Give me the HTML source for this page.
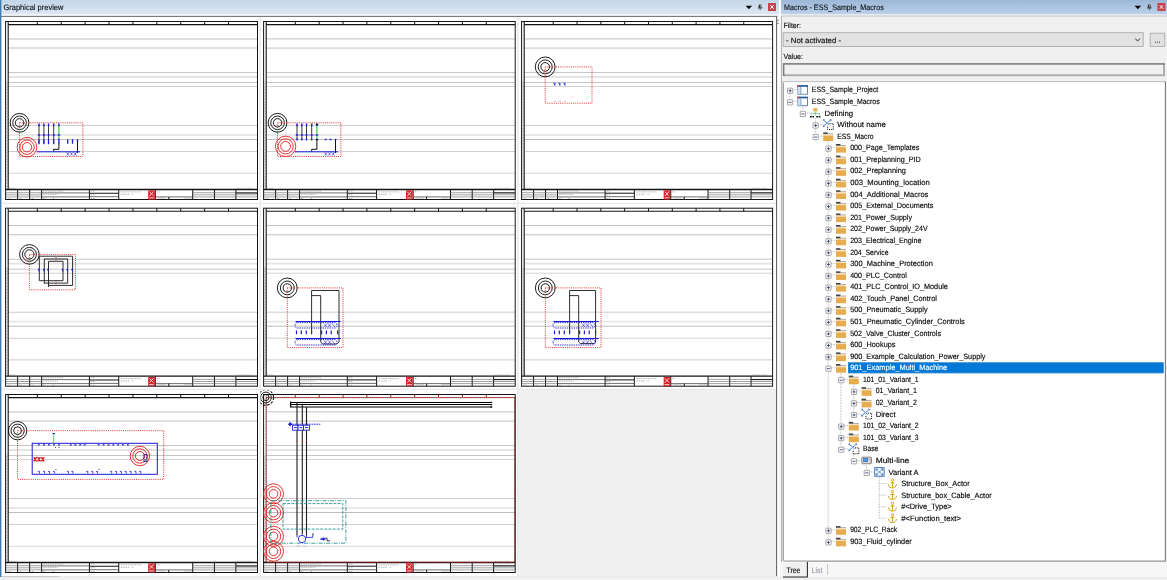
<!DOCTYPE html>
<html><head><meta charset="utf-8"><title>Graphical preview</title>
<style>html,body{margin:0;padding:0;background:#f0f0f0}body{width:1167px;height:580px;overflow:hidden;font-family:"Liberation Sans",sans-serif}svg{display:block;will-change:transform}text{font-family:"Liberation Sans",sans-serif;text-rendering:geometricPrecision;stroke-width:0.15px}</style>
</head><body>
<svg width="1167" height="580" viewBox="0 0 1167 580" font-family="Liberation Sans, sans-serif">
<defs>
<linearGradient id="tl" x1="0" y1="0" x2="0" y2="1"><stop offset="0" stop-color="#c3d5e8"/><stop offset="1" stop-color="#dde7f2"/></linearGradient>
<linearGradient id="tr" x1="0" y1="0" x2="0" y2="1"><stop offset="0" stop-color="#9cb7d7"/><stop offset="1" stop-color="#bcd1e9"/></linearGradient>
<clipPath id="c8"><rect x="260.5" y="390.5" width="257" height="186"/></clipPath>
<g id="fold"><rect x="0" y="1.7" width="10" height="1.6" fill="#f6e3bd"/><rect x="0" y="3.2" width="10" height="5.45" fill="#e6ac4e"/><rect x="0" y="0" width="4.4" height="1.6" fill="#3c3c3c"/><rect x="0" y="1.2" width="10" height="0.5" fill="#6c6c6c"/></g>
<g id="win"><rect x="0.4" y="0.4" width="9.6" height="8.6" fill="#fff" stroke="#3f6fa6" stroke-width="0.8"/><rect x="0.8" y="1.8" width="2.6" height="6.8" fill="#cfe2f4"/><rect x="0" y="0" width="10.4" height="1.6" fill="#2d5a9a"/><rect x="0" y="0" width="2.4" height="1.3" fill="#d8343c"/><path d="M3.4 1.8V8.8" stroke="#3f6fa6" stroke-width="0.6"/></g>
<g id="plus"><rect x="-2.6" y="-2.6" width="5.2" height="5.2" rx="0.4" fill="#fff" stroke="#8f8f8f" stroke-width="0.8"/><path d="M-1.5 0H1.5M0 -1.5V1.5" stroke="#2c3a78" stroke-width="0.85"/></g>
<g id="minus"><rect x="-2.6" y="-2.6" width="5.2" height="5.2" rx="0.4" fill="#fff" stroke="#8f8f8f" stroke-width="0.8"/><path d="M-1.5 0H1.5" stroke="#2c3a78" stroke-width="0.85"/></g>
<g id="mac"><path d="M6.4 4.4H10.2V10.3H4.5V6.2" stroke="#111" stroke-width="1" stroke-dasharray="1.1 1.05" fill="none"/><path d="M0.5 0.7L4.1 3.8L7.9 0.7M0.3 7.1L4.1 3.8L6.2 5.6" stroke="#2a6cbc" stroke-width="0.85" fill="none"/><path d="M0.3 1.6V0.4H1.6M8.1 1.6V0.4H6.8M0.2 6V7.3H1.5" stroke="#1f5aa6" stroke-width="0.7" fill="none"/><circle cx="4.1" cy="3.8" r="0.8" fill="#7ab4ee"/></g>
<g id="defi"><rect x="3.4" y="0" width="3.9" height="3.4" fill="#eeb04a"/><path d="M5.5 3.6V5.4M1.2 7.4V5.4H9.6V7.4M5.5 5.4V7.4" stroke="#5cb874" stroke-width="0.7" fill="none"/><path d="M0 8.7h1.7M2.4 8.7h1.6M6.3 8.7h1.7M8.7 8.7h1.7" stroke="#111" stroke-width="1.6"/></g>
<g id="multi"><rect x="0.4" y="0.4" width="9.6" height="6.6" rx="0.8" fill="#e4e4e4" stroke="#666" stroke-width="0.8"/><rect x="2.2" y="1.6" width="4.2" height="3.4" fill="#4f9be6" stroke="#2a62a8" stroke-width="0.6"/><path d="M7.2 2.4H9.2V6" stroke="#b88" stroke-width="0.7" fill="none"/></g>
<g id="vari"><rect x="0.5" y="0.5" width="9.4" height="8.6" fill="#f2f7fc" stroke="#2f6fb4" stroke-width="0.9"/><path d="M2.2 2L8.2 7.6M8.2 2L2.2 7.6" stroke="#4f88c8" stroke-width="0.8"/><path d="M2 3.4V1.8H3.6M8.4 3.4V1.8H6.8M2 6.2V7.8H3.6M8.4 6.2V7.8H6.8" stroke="#1d4f8c" stroke-width="0.7" fill="none"/></g>
<g id="anch"><circle cx="4.4" cy="1.5" r="1.2" fill="none" stroke="#d6a21e" stroke-width="0.9"/><path d="M4.4 2.7V9.2M2.4 4.4H6.4M0.4 5.8C0.6 8.2 2.4 9.4 4.4 9.4C6.4 9.4 8.2 8.2 8.4 5.8" stroke="#d6a21e" stroke-width="1" fill="none"/></g>
</defs>
<rect x="0" y="0" width="781" height="580" fill="#fdfdfd"/>
<rect x="0" y="0" width="779" height="14.2" fill="url(#tl)"/>
<rect x="0" y="14.2" width="779" height="1.8" fill="#f1f5fa"/>
<rect x="1" y="17" width="775.6" height="559.4" fill="#fff"/>
<rect x="1" y="15.9" width="776.4" height="1" fill="#6e6e6e"/>
<rect x="776" y="16" width="1.1" height="560.6" fill="#6a6a6a"/>
<path d="M777 20.3h2M777 23.3h2" stroke="#555" stroke-width="0.7"/>
<rect x="518.3" y="389.6" width="257.7" height="186.8" fill="#f0f0f0"/>
<path d="M260.2 17V576M517.9 17V576" stroke="#e3e3e3" stroke-width="1.1"/>
<path d="M1.5 203.2H776M1.5 389.2H776" stroke="#e3e3e3" stroke-width="1.1"/>
<rect x="0" y="576.3" width="781" height="3.7" fill="#f1f1f1"/>
<rect x="1.5" y="576.2" width="58" height="0.9" fill="#c4c4c4"/>
<rect x="59.5" y="576.2" width="717" height="0.9" fill="#e6e6e6"/>
<rect x="0" y="0" width="1.4" height="577" fill="#3f7db0"/>
<g transform="translate(5.6,21.5) scale(1.0011923688394277,1)">
<rect x="0" y="0" width="251.6" height="178.0" fill="#fff" stroke="none"/>
<path d="M2.6 17.4H251.6" stroke="#c2c2c2" stroke-width="1" fill="none"/>
<path d="M2.6 26.6H251.6" stroke="#c2c2c2" stroke-width="1" fill="none"/>
<path d="M2.6 51H251.6" stroke="#c6c6c6" stroke-width="1" fill="none"/>
<path d="M2.6 55.5H251.6" stroke="#e4e4e4" stroke-width="1.8" fill="none"/>
<path d="M2.6 61H251.6" stroke="#c6c6c6" stroke-width="1" fill="none"/>
<path d="M2.6 65H251.6" stroke="#d4d4d4" stroke-width="1" fill="none"/>
<path d="M2.6 104H251.6" stroke="#cccccc" stroke-width="1" fill="none"/>
<path d="M2.6 113.5H251.6" stroke="#e8e8e8" stroke-width="1.8" fill="none"/>
<path d="M2.6 118H251.6" stroke="#bebebe" stroke-width="1" fill="none"/>
<path d="M2.6 130H251.6" stroke="#d0d0d0" stroke-width="1" fill="none"/>
<path d="M2.6 151.75H251.6" stroke="#d6d6d6" stroke-width="1.2" fill="none"/>
<rect x="0" y="0" width="251.6" height="178.0" fill="none" stroke="#141414" stroke-width="1"/>
<path d="M1.35 60V167" stroke="#8a6a6a" stroke-width="0.8" stroke-dasharray="0.7 0.8" fill="none"/>
<path d="M2.6 0V168" stroke="#141414" stroke-width="1.1" fill="none"/>
<path d="M2.6 3.1H251.6" stroke="#141414" stroke-width="1.1" fill="none"/>
<path d="M31.7 0V3.4M55.57 0V3.4M79.44 0V3.4M103.31 0V3.4M127.18 0V3.4M151.05 0V3.4M174.92 0V3.4M198.79 0V3.4M222.66 0V3.4" stroke="#141414" stroke-width="1" fill="none"/>
<path d="M0 168H251.6" stroke="#141414" stroke-width="1.3" fill="none"/>
<path d="M12 168V178.0M24 168V178.0M36 168V178.0M83.7 168V178.0M113 168V178.0M149.5 168V178.0M186.9 168V178.0M208.6 168V178.0M230 168V178.0" stroke="#141414" stroke-width="1" fill="none"/>
<path d="M0 171.2H36M186.9 171.2H251.6M0 173.3H36M186.9 173.3H251.6M0 175.4H36M186.9 175.4H251.6" stroke="#555" stroke-width="0.55" fill="none"/>
<path d="M36 171.4H83.7M36 175.4H83.7M83.7 175.2H113M149.5 175.4H186.9" stroke="#333" stroke-width="0.7" fill="none"/>
<path d="M83.7 171.7H113M163 175.4V178.0M230 171.4H251.6" stroke="#141414" stroke-width="1" fill="none"/>
<path d="M37.5 169.6H58M37.5 172.9H52M37.5 177H40M47 177H49M85 169.6H89M85 173.3H89M85 177H89M115 170.4H135M115 172.8H124M126 172.8H128M151 170.4H154M3 166.8H10M231 166.8H246M2 177H5M14 177H16M26 177H28M178 176.6H186M152 176.6H160" stroke="#777" stroke-width="0.5" stroke-dasharray="1.6 0.7" fill="none"/>
<rect x="142.4" y="168.8" width="6.7" height="9.2" fill="#d6252c"/>
<path d="M143.6 170.2L147.6 174.2M147.8 170L143.8 174.4M143.4 176.4H148" stroke="#fff" stroke-width="0.8" fill="none"/>
</g>
<g transform="translate(263.6,21.5) scale(1,1)">
<rect x="0" y="0" width="251.6" height="178.0" fill="#fff" stroke="none"/>
<path d="M2.6 17.4H251.6" stroke="#c2c2c2" stroke-width="1" fill="none"/>
<path d="M2.6 26.6H251.6" stroke="#c2c2c2" stroke-width="1" fill="none"/>
<path d="M2.6 51H251.6" stroke="#c6c6c6" stroke-width="1" fill="none"/>
<path d="M2.6 55.5H251.6" stroke="#e4e4e4" stroke-width="1.8" fill="none"/>
<path d="M2.6 61H251.6" stroke="#c6c6c6" stroke-width="1" fill="none"/>
<path d="M2.6 65H251.6" stroke="#d4d4d4" stroke-width="1" fill="none"/>
<path d="M2.6 104H251.6" stroke="#cccccc" stroke-width="1" fill="none"/>
<path d="M2.6 113.5H251.6" stroke="#e8e8e8" stroke-width="1.8" fill="none"/>
<path d="M2.6 118H251.6" stroke="#bebebe" stroke-width="1" fill="none"/>
<path d="M2.6 130H251.6" stroke="#d0d0d0" stroke-width="1" fill="none"/>
<path d="M2.6 151.75H251.6" stroke="#d6d6d6" stroke-width="1.2" fill="none"/>
<rect x="0" y="0" width="251.6" height="178.0" fill="none" stroke="#141414" stroke-width="1"/>
<path d="M1.35 60V167" stroke="#8a6a6a" stroke-width="0.8" stroke-dasharray="0.7 0.8" fill="none"/>
<path d="M2.6 0V168" stroke="#141414" stroke-width="1.1" fill="none"/>
<path d="M2.6 3.1H251.6" stroke="#141414" stroke-width="1.1" fill="none"/>
<path d="M31.7 0V3.4M55.57 0V3.4M79.44 0V3.4M103.31 0V3.4M127.18 0V3.4M151.05 0V3.4M174.92 0V3.4M198.79 0V3.4M222.66 0V3.4" stroke="#141414" stroke-width="1" fill="none"/>
<path d="M0 168H251.6" stroke="#141414" stroke-width="1.3" fill="none"/>
<path d="M12 168V178.0M24 168V178.0M36 168V178.0M83.7 168V178.0M113 168V178.0M149.5 168V178.0M186.9 168V178.0M208.6 168V178.0M230 168V178.0" stroke="#141414" stroke-width="1" fill="none"/>
<path d="M0 171.2H36M186.9 171.2H251.6M0 173.3H36M186.9 173.3H251.6M0 175.4H36M186.9 175.4H251.6" stroke="#555" stroke-width="0.55" fill="none"/>
<path d="M36 171.4H83.7M36 175.4H83.7M83.7 175.2H113M149.5 175.4H186.9" stroke="#333" stroke-width="0.7" fill="none"/>
<path d="M83.7 171.7H113M163 175.4V178.0M230 171.4H251.6" stroke="#141414" stroke-width="1" fill="none"/>
<path d="M37.5 169.6H58M37.5 172.9H52M37.5 177H40M47 177H49M85 169.6H89M85 173.3H89M85 177H89M115 170.4H135M115 172.8H124M126 172.8H128M151 170.4H154M3 166.8H10M231 166.8H246M2 177H5M14 177H16M26 177H28M178 176.6H186M152 176.6H160" stroke="#777" stroke-width="0.5" stroke-dasharray="1.6 0.7" fill="none"/>
<rect x="142.4" y="168.8" width="6.7" height="9.2" fill="#d6252c"/>
<path d="M143.6 170.2L147.6 174.2M147.8 170L143.8 174.4M143.4 176.4H148" stroke="#fff" stroke-width="0.8" fill="none"/>
</g>
<g transform="translate(521.6,21.5) scale(0.9976152623211447,1)">
<rect x="0" y="0" width="251.6" height="178.0" fill="#fff" stroke="none"/>
<path d="M2.6 17.4H251.6" stroke="#c2c2c2" stroke-width="1" fill="none"/>
<path d="M2.6 26.6H251.6" stroke="#c2c2c2" stroke-width="1" fill="none"/>
<path d="M2.6 51H251.6" stroke="#c6c6c6" stroke-width="1" fill="none"/>
<path d="M2.6 55.5H251.6" stroke="#e4e4e4" stroke-width="1.8" fill="none"/>
<path d="M2.6 61H251.6" stroke="#c6c6c6" stroke-width="1" fill="none"/>
<path d="M2.6 65H251.6" stroke="#d4d4d4" stroke-width="1" fill="none"/>
<path d="M2.6 104H251.6" stroke="#cccccc" stroke-width="1" fill="none"/>
<path d="M2.6 113.5H251.6" stroke="#e8e8e8" stroke-width="1.8" fill="none"/>
<path d="M2.6 118H251.6" stroke="#bebebe" stroke-width="1" fill="none"/>
<path d="M2.6 130H251.6" stroke="#d0d0d0" stroke-width="1" fill="none"/>
<path d="M2.6 151.75H251.6" stroke="#d6d6d6" stroke-width="1.2" fill="none"/>
<rect x="0" y="0" width="251.6" height="178.0" fill="none" stroke="#141414" stroke-width="1"/>
<path d="M1.35 60V167" stroke="#8a6a6a" stroke-width="0.8" stroke-dasharray="0.7 0.8" fill="none"/>
<path d="M2.6 0V168" stroke="#141414" stroke-width="1.1" fill="none"/>
<path d="M2.6 3.1H251.6" stroke="#141414" stroke-width="1.1" fill="none"/>
<path d="M31.7 0V3.4M55.57 0V3.4M79.44 0V3.4M103.31 0V3.4M127.18 0V3.4M151.05 0V3.4M174.92 0V3.4M198.79 0V3.4M222.66 0V3.4" stroke="#141414" stroke-width="1" fill="none"/>
<path d="M0 168H251.6" stroke="#141414" stroke-width="1.3" fill="none"/>
<path d="M12 168V178.0M24 168V178.0M36 168V178.0M83.7 168V178.0M113 168V178.0M149.5 168V178.0M186.9 168V178.0M208.6 168V178.0M230 168V178.0" stroke="#141414" stroke-width="1" fill="none"/>
<path d="M0 171.2H36M186.9 171.2H251.6M0 173.3H36M186.9 173.3H251.6M0 175.4H36M186.9 175.4H251.6" stroke="#555" stroke-width="0.55" fill="none"/>
<path d="M36 171.4H83.7M36 175.4H83.7M83.7 175.2H113M149.5 175.4H186.9" stroke="#333" stroke-width="0.7" fill="none"/>
<path d="M83.7 171.7H113M163 175.4V178.0M230 171.4H251.6" stroke="#141414" stroke-width="1" fill="none"/>
<path d="M37.5 169.6H58M37.5 172.9H52M37.5 177H40M47 177H49M85 169.6H89M85 173.3H89M85 177H89M115 170.4H135M115 172.8H124M126 172.8H128M151 170.4H154M3 166.8H10M231 166.8H246M2 177H5M14 177H16M26 177H28M178 176.6H186M152 176.6H160" stroke="#777" stroke-width="0.5" stroke-dasharray="1.6 0.7" fill="none"/>
<rect x="142.4" y="168.8" width="6.7" height="9.2" fill="#d6252c"/>
<path d="M143.6 170.2L147.6 174.2M147.8 170L143.8 174.4M143.4 176.4H148" stroke="#fff" stroke-width="0.8" fill="none"/>
</g>
<g transform="translate(5.6,208.2) scale(1.0011923688394277,1)">
<rect x="0" y="0" width="251.6" height="178.0" fill="#fff" stroke="none"/>
<path d="M2.6 17.4H251.6" stroke="#c2c2c2" stroke-width="1" fill="none"/>
<path d="M2.6 26.6H251.6" stroke="#c2c2c2" stroke-width="1" fill="none"/>
<path d="M2.6 51H251.6" stroke="#c6c6c6" stroke-width="1" fill="none"/>
<path d="M2.6 55.5H251.6" stroke="#e4e4e4" stroke-width="1.8" fill="none"/>
<path d="M2.6 61H251.6" stroke="#c6c6c6" stroke-width="1" fill="none"/>
<path d="M2.6 65H251.6" stroke="#d4d4d4" stroke-width="1" fill="none"/>
<path d="M2.6 104H251.6" stroke="#cccccc" stroke-width="1" fill="none"/>
<path d="M2.6 113.5H251.6" stroke="#e8e8e8" stroke-width="1.8" fill="none"/>
<path d="M2.6 118H251.6" stroke="#bebebe" stroke-width="1" fill="none"/>
<path d="M2.6 130H251.6" stroke="#d0d0d0" stroke-width="1" fill="none"/>
<path d="M2.6 151.75H251.6" stroke="#d6d6d6" stroke-width="1.2" fill="none"/>
<rect x="0" y="0" width="251.6" height="178.0" fill="none" stroke="#141414" stroke-width="1"/>
<path d="M1.35 60V167" stroke="#8a6a6a" stroke-width="0.8" stroke-dasharray="0.7 0.8" fill="none"/>
<path d="M2.6 0V168" stroke="#141414" stroke-width="1.1" fill="none"/>
<path d="M2.6 3.1H251.6" stroke="#141414" stroke-width="1.1" fill="none"/>
<path d="M31.7 0V3.4M55.57 0V3.4M79.44 0V3.4M103.31 0V3.4M127.18 0V3.4M151.05 0V3.4M174.92 0V3.4M198.79 0V3.4M222.66 0V3.4" stroke="#141414" stroke-width="1" fill="none"/>
<path d="M0 168H251.6" stroke="#141414" stroke-width="1.3" fill="none"/>
<path d="M12 168V178.0M24 168V178.0M36 168V178.0M83.7 168V178.0M113 168V178.0M149.5 168V178.0M186.9 168V178.0M208.6 168V178.0M230 168V178.0" stroke="#141414" stroke-width="1" fill="none"/>
<path d="M0 171.2H36M186.9 171.2H251.6M0 173.3H36M186.9 173.3H251.6M0 175.4H36M186.9 175.4H251.6" stroke="#555" stroke-width="0.55" fill="none"/>
<path d="M36 171.4H83.7M36 175.4H83.7M83.7 175.2H113M149.5 175.4H186.9" stroke="#333" stroke-width="0.7" fill="none"/>
<path d="M83.7 171.7H113M163 175.4V178.0M230 171.4H251.6" stroke="#141414" stroke-width="1" fill="none"/>
<path d="M37.5 169.6H58M37.5 172.9H52M37.5 177H40M47 177H49M85 169.6H89M85 173.3H89M85 177H89M115 170.4H135M115 172.8H124M126 172.8H128M151 170.4H154M3 166.8H10M231 166.8H246M2 177H5M14 177H16M26 177H28M178 176.6H186M152 176.6H160" stroke="#777" stroke-width="0.5" stroke-dasharray="1.6 0.7" fill="none"/>
<rect x="142.4" y="168.8" width="6.7" height="9.2" fill="#d6252c"/>
<path d="M143.6 170.2L147.6 174.2M147.8 170L143.8 174.4M143.4 176.4H148" stroke="#fff" stroke-width="0.8" fill="none"/>
</g>
<g transform="translate(263.6,208.2) scale(1,1)">
<rect x="0" y="0" width="251.6" height="178.0" fill="#fff" stroke="none"/>
<path d="M2.6 17.4H251.6" stroke="#c2c2c2" stroke-width="1" fill="none"/>
<path d="M2.6 26.6H251.6" stroke="#c2c2c2" stroke-width="1" fill="none"/>
<path d="M2.6 51H251.6" stroke="#c6c6c6" stroke-width="1" fill="none"/>
<path d="M2.6 55.5H251.6" stroke="#e4e4e4" stroke-width="1.8" fill="none"/>
<path d="M2.6 61H251.6" stroke="#c6c6c6" stroke-width="1" fill="none"/>
<path d="M2.6 65H251.6" stroke="#d4d4d4" stroke-width="1" fill="none"/>
<path d="M2.6 104H251.6" stroke="#cccccc" stroke-width="1" fill="none"/>
<path d="M2.6 113.5H251.6" stroke="#e8e8e8" stroke-width="1.8" fill="none"/>
<path d="M2.6 118H251.6" stroke="#bebebe" stroke-width="1" fill="none"/>
<path d="M2.6 130H251.6" stroke="#d0d0d0" stroke-width="1" fill="none"/>
<path d="M2.6 151.75H251.6" stroke="#d6d6d6" stroke-width="1.2" fill="none"/>
<rect x="0" y="0" width="251.6" height="178.0" fill="none" stroke="#141414" stroke-width="1"/>
<path d="M1.35 60V167" stroke="#8a6a6a" stroke-width="0.8" stroke-dasharray="0.7 0.8" fill="none"/>
<path d="M2.6 0V168" stroke="#141414" stroke-width="1.1" fill="none"/>
<path d="M2.6 3.1H251.6" stroke="#141414" stroke-width="1.1" fill="none"/>
<path d="M31.7 0V3.4M55.57 0V3.4M79.44 0V3.4M103.31 0V3.4M127.18 0V3.4M151.05 0V3.4M174.92 0V3.4M198.79 0V3.4M222.66 0V3.4" stroke="#141414" stroke-width="1" fill="none"/>
<path d="M0 168H251.6" stroke="#141414" stroke-width="1.3" fill="none"/>
<path d="M12 168V178.0M24 168V178.0M36 168V178.0M83.7 168V178.0M113 168V178.0M149.5 168V178.0M186.9 168V178.0M208.6 168V178.0M230 168V178.0" stroke="#141414" stroke-width="1" fill="none"/>
<path d="M0 171.2H36M186.9 171.2H251.6M0 173.3H36M186.9 173.3H251.6M0 175.4H36M186.9 175.4H251.6" stroke="#555" stroke-width="0.55" fill="none"/>
<path d="M36 171.4H83.7M36 175.4H83.7M83.7 175.2H113M149.5 175.4H186.9" stroke="#333" stroke-width="0.7" fill="none"/>
<path d="M83.7 171.7H113M163 175.4V178.0M230 171.4H251.6" stroke="#141414" stroke-width="1" fill="none"/>
<path d="M37.5 169.6H58M37.5 172.9H52M37.5 177H40M47 177H49M85 169.6H89M85 173.3H89M85 177H89M115 170.4H135M115 172.8H124M126 172.8H128M151 170.4H154M3 166.8H10M231 166.8H246M2 177H5M14 177H16M26 177H28M178 176.6H186M152 176.6H160" stroke="#777" stroke-width="0.5" stroke-dasharray="1.6 0.7" fill="none"/>
<rect x="142.4" y="168.8" width="6.7" height="9.2" fill="#d6252c"/>
<path d="M143.6 170.2L147.6 174.2M147.8 170L143.8 174.4M143.4 176.4H148" stroke="#fff" stroke-width="0.8" fill="none"/>
</g>
<g transform="translate(521.6,208.2) scale(0.9976152623211447,1)">
<rect x="0" y="0" width="251.6" height="178.0" fill="#fff" stroke="none"/>
<path d="M2.6 17.4H251.6" stroke="#c2c2c2" stroke-width="1" fill="none"/>
<path d="M2.6 26.6H251.6" stroke="#c2c2c2" stroke-width="1" fill="none"/>
<path d="M2.6 51H251.6" stroke="#c6c6c6" stroke-width="1" fill="none"/>
<path d="M2.6 55.5H251.6" stroke="#e4e4e4" stroke-width="1.8" fill="none"/>
<path d="M2.6 61H251.6" stroke="#c6c6c6" stroke-width="1" fill="none"/>
<path d="M2.6 65H251.6" stroke="#d4d4d4" stroke-width="1" fill="none"/>
<path d="M2.6 104H251.6" stroke="#cccccc" stroke-width="1" fill="none"/>
<path d="M2.6 113.5H251.6" stroke="#e8e8e8" stroke-width="1.8" fill="none"/>
<path d="M2.6 118H251.6" stroke="#bebebe" stroke-width="1" fill="none"/>
<path d="M2.6 130H251.6" stroke="#d0d0d0" stroke-width="1" fill="none"/>
<path d="M2.6 151.75H251.6" stroke="#d6d6d6" stroke-width="1.2" fill="none"/>
<rect x="0" y="0" width="251.6" height="178.0" fill="none" stroke="#141414" stroke-width="1"/>
<path d="M1.35 60V167" stroke="#8a6a6a" stroke-width="0.8" stroke-dasharray="0.7 0.8" fill="none"/>
<path d="M2.6 0V168" stroke="#141414" stroke-width="1.1" fill="none"/>
<path d="M2.6 3.1H251.6" stroke="#141414" stroke-width="1.1" fill="none"/>
<path d="M31.7 0V3.4M55.57 0V3.4M79.44 0V3.4M103.31 0V3.4M127.18 0V3.4M151.05 0V3.4M174.92 0V3.4M198.79 0V3.4M222.66 0V3.4" stroke="#141414" stroke-width="1" fill="none"/>
<path d="M0 168H251.6" stroke="#141414" stroke-width="1.3" fill="none"/>
<path d="M12 168V178.0M24 168V178.0M36 168V178.0M83.7 168V178.0M113 168V178.0M149.5 168V178.0M186.9 168V178.0M208.6 168V178.0M230 168V178.0" stroke="#141414" stroke-width="1" fill="none"/>
<path d="M0 171.2H36M186.9 171.2H251.6M0 173.3H36M186.9 173.3H251.6M0 175.4H36M186.9 175.4H251.6" stroke="#555" stroke-width="0.55" fill="none"/>
<path d="M36 171.4H83.7M36 175.4H83.7M83.7 175.2H113M149.5 175.4H186.9" stroke="#333" stroke-width="0.7" fill="none"/>
<path d="M83.7 171.7H113M163 175.4V178.0M230 171.4H251.6" stroke="#141414" stroke-width="1" fill="none"/>
<path d="M37.5 169.6H58M37.5 172.9H52M37.5 177H40M47 177H49M85 169.6H89M85 173.3H89M85 177H89M115 170.4H135M115 172.8H124M126 172.8H128M151 170.4H154M3 166.8H10M231 166.8H246M2 177H5M14 177H16M26 177H28M178 176.6H186M152 176.6H160" stroke="#777" stroke-width="0.5" stroke-dasharray="1.6 0.7" fill="none"/>
<rect x="142.4" y="168.8" width="6.7" height="9.2" fill="#d6252c"/>
<path d="M143.6 170.2L147.6 174.2M147.8 170L143.8 174.4M143.4 176.4H148" stroke="#fff" stroke-width="0.8" fill="none"/>
</g>
<g transform="translate(5.6,394.5) scale(1.0011923688394277,1)">
<rect x="0" y="0" width="251.6" height="178.0" fill="#fff" stroke="none"/>
<path d="M2.6 17.4H251.6" stroke="#c2c2c2" stroke-width="1" fill="none"/>
<path d="M2.6 26.6H251.6" stroke="#c2c2c2" stroke-width="1" fill="none"/>
<path d="M2.6 51H251.6" stroke="#c6c6c6" stroke-width="1" fill="none"/>
<path d="M2.6 55.5H251.6" stroke="#e4e4e4" stroke-width="1.8" fill="none"/>
<path d="M2.6 61H251.6" stroke="#c6c6c6" stroke-width="1" fill="none"/>
<path d="M2.6 65H251.6" stroke="#d4d4d4" stroke-width="1" fill="none"/>
<path d="M2.6 104H251.6" stroke="#cccccc" stroke-width="1" fill="none"/>
<path d="M2.6 113.5H251.6" stroke="#e8e8e8" stroke-width="1.8" fill="none"/>
<path d="M2.6 118H251.6" stroke="#bebebe" stroke-width="1" fill="none"/>
<path d="M2.6 130H251.6" stroke="#d0d0d0" stroke-width="1" fill="none"/>
<path d="M2.6 151.75H251.6" stroke="#d6d6d6" stroke-width="1.2" fill="none"/>
<rect x="0" y="0" width="251.6" height="178.0" fill="none" stroke="#141414" stroke-width="1"/>
<path d="M1.35 60V167" stroke="#8a6a6a" stroke-width="0.8" stroke-dasharray="0.7 0.8" fill="none"/>
<path d="M2.6 0V168" stroke="#141414" stroke-width="1.1" fill="none"/>
<path d="M2.6 3.1H251.6" stroke="#141414" stroke-width="1.1" fill="none"/>
<path d="M31.7 0V3.4M55.57 0V3.4M79.44 0V3.4M103.31 0V3.4M127.18 0V3.4M151.05 0V3.4M174.92 0V3.4M198.79 0V3.4M222.66 0V3.4" stroke="#141414" stroke-width="1" fill="none"/>
<path d="M0 168H251.6" stroke="#141414" stroke-width="1.3" fill="none"/>
<path d="M12 168V178.0M24 168V178.0M36 168V178.0M83.7 168V178.0M113 168V178.0M149.5 168V178.0M186.9 168V178.0M208.6 168V178.0M230 168V178.0" stroke="#141414" stroke-width="1" fill="none"/>
<path d="M0 171.2H36M186.9 171.2H251.6M0 173.3H36M186.9 173.3H251.6M0 175.4H36M186.9 175.4H251.6" stroke="#555" stroke-width="0.55" fill="none"/>
<path d="M36 171.4H83.7M36 175.4H83.7M83.7 175.2H113M149.5 175.4H186.9" stroke="#333" stroke-width="0.7" fill="none"/>
<path d="M83.7 171.7H113M163 175.4V178.0M230 171.4H251.6" stroke="#141414" stroke-width="1" fill="none"/>
<path d="M37.5 169.6H58M37.5 172.9H52M37.5 177H40M47 177H49M85 169.6H89M85 173.3H89M85 177H89M115 170.4H135M115 172.8H124M126 172.8H128M151 170.4H154M3 166.8H10M231 166.8H246M2 177H5M14 177H16M26 177H28M178 176.6H186M152 176.6H160" stroke="#777" stroke-width="0.5" stroke-dasharray="1.6 0.7" fill="none"/>
<rect x="142.4" y="168.8" width="6.7" height="9.2" fill="#d6252c"/>
<path d="M143.6 170.2L147.6 174.2M147.8 170L143.8 174.4M143.4 176.4H148" stroke="#fff" stroke-width="0.8" fill="none"/>
</g>
<g clip-path="url(#c8)">
<g transform="translate(263.6,394.5) scale(1,1)">
<rect x="0" y="0" width="251.6" height="178.0" fill="#fff" stroke="none"/>
<path d="M2.6 17.4H251.6" stroke="#c2c2c2" stroke-width="1" fill="none"/>
<path d="M2.6 26.6H251.6" stroke="#c2c2c2" stroke-width="1" fill="none"/>
<path d="M2.6 51H251.6" stroke="#c6c6c6" stroke-width="1" fill="none"/>
<path d="M2.6 55.5H251.6" stroke="#e4e4e4" stroke-width="1.8" fill="none"/>
<path d="M2.6 61H251.6" stroke="#c6c6c6" stroke-width="1" fill="none"/>
<path d="M2.6 65H251.6" stroke="#d4d4d4" stroke-width="1" fill="none"/>
<path d="M2.6 104H251.6" stroke="#cccccc" stroke-width="1" fill="none"/>
<path d="M2.6 113.5H251.6" stroke="#e8e8e8" stroke-width="1.8" fill="none"/>
<path d="M2.6 118H251.6" stroke="#bebebe" stroke-width="1" fill="none"/>
<path d="M2.6 130H251.6" stroke="#d0d0d0" stroke-width="1" fill="none"/>
<path d="M2.6 151.75H251.6" stroke="#d6d6d6" stroke-width="1.2" fill="none"/>
<rect x="0" y="0" width="251.6" height="178.0" fill="none" stroke="#141414" stroke-width="1"/>
<path d="M1.35 60V167" stroke="#8a6a6a" stroke-width="0.8" stroke-dasharray="0.7 0.8" fill="none"/>
<path d="M2.6 0V168M2.6 3.1H251.6M251.2 3.1V168" stroke="#333" stroke-width="0.6" fill="none"/>
<path d="M31.7 0V3.4M55.57 0V3.4M79.44 0V3.4M103.31 0V3.4M127.18 0V3.4M151.05 0V3.4M174.92 0V3.4M198.79 0V3.4M222.66 0V3.4" stroke="#a02020" stroke-width="1" fill="none"/>
<path d="M0 168H251.6" stroke="#141414" stroke-width="1.3" fill="none"/>
<path d="M12 168V178.0M24 168V178.0M36 168V178.0M83.7 168V178.0M113 168V178.0M149.5 168V178.0M186.9 168V178.0M208.6 168V178.0M230 168V178.0" stroke="#141414" stroke-width="1" fill="none"/>
<path d="M0 171.2H36M186.9 171.2H251.6M0 173.3H36M186.9 173.3H251.6M0 175.4H36M186.9 175.4H251.6" stroke="#555" stroke-width="0.55" fill="none"/>
<path d="M36 171.4H83.7M36 175.4H83.7M83.7 175.2H113M149.5 175.4H186.9" stroke="#333" stroke-width="0.7" fill="none"/>
<path d="M83.7 171.7H113M163 175.4V178.0M230 171.4H251.6" stroke="#141414" stroke-width="1" fill="none"/>
<path d="M37.5 169.6H58M37.5 172.9H52M37.5 177H40M47 177H49M85 169.6H89M85 173.3H89M85 177H89M115 170.4H135M115 172.8H124M126 172.8H128M151 170.4H154M3 166.8H10M231 166.8H246M2 177H5M14 177H16M26 177H28M178 176.6H186M152 176.6H160" stroke="#777" stroke-width="0.5" stroke-dasharray="1.6 0.7" fill="none"/>
<rect x="142.4" y="168.8" width="6.7" height="9.2" fill="#d6252c"/>
<path d="M143.6 170.2L147.6 174.2M147.8 170L143.8 174.4M143.4 176.4H148" stroke="#fff" stroke-width="0.8" fill="none"/>
<path d="M2.6 3.1H251.2V167.8H2.6Z" stroke="#c41c1c" stroke-width="0.95" stroke-dasharray="1.3 0.9" fill="none"/>
</g>
<circle cx="265.9" cy="397.5" r="7.7" fill="none" stroke="#111" stroke-width="1.1" stroke-dasharray="2.6 1.5"/><circle cx="265.9" cy="397.5" r="5.4" fill="none" stroke="#111" stroke-width="0.95"/><circle cx="265.9" cy="397.5" r="3.1" fill="none" stroke="#111" stroke-width="0.95"/>
<path d="M291 402.4H491.8M291 404.55H491.8M291 406.9H491.8" stroke="#000" stroke-width="1.05" fill="none"/>
<path d="M290.6 401.6V407.6M490.4 402.3h1.8M490.4 404.6h1.8M490.4 407h1.8" stroke="#111" stroke-width="1.3" fill="none"/>
<path d="M297 402.3V535.2M302.3 404.6V534.6M306.5 407V535.2" stroke="#1c1c1c" stroke-width="1.1" fill="none"/>
<path d="M290 424.2H321" stroke="#1a1ad8" stroke-width="0.9" stroke-dasharray="1.6 0.8" fill="none"/>
<rect x="292.6" y="425.2" width="5.4" height="5" fill="#fff" stroke="#1a1ad8" stroke-width="0.9"/><rect x="298" y="425.2" width="5.6" height="5" fill="#fff" stroke="#1a1ad8" stroke-width="0.9"/><rect x="303.6" y="425.2" width="5.8" height="5" fill="#fff" stroke="#1a1ad8" stroke-width="0.9"/>
<path d="M290 422.6l2 1.6l-2 1.6l-1.6-1.6zM294 427.6h3M299.4 427.6h3M305 427.6h3" stroke="#1a1ad8" stroke-width="0.9" fill="#1a1ad8"/>
<path d="M296.6 441.2h1M301.9 441.2h1M306.1 441.2h1" stroke="#e02020" stroke-width="1"/>
<circle cx="273.5" cy="493.8" r="10" fill="none" stroke="#e02828" stroke-width="0.95"/><circle cx="273.5" cy="493.8" r="7.2" fill="none" stroke="#e02828" stroke-width="0.95"/><circle cx="273.5" cy="493.8" r="4.3" fill="none" stroke="#e02828" stroke-width="0.95"/>
<circle cx="273.5" cy="512.7" r="10" fill="none" stroke="#e02828" stroke-width="0.95"/><circle cx="273.5" cy="512.7" r="7.2" fill="none" stroke="#e02828" stroke-width="0.95"/><circle cx="273.5" cy="512.7" r="4.3" fill="none" stroke="#e02828" stroke-width="0.95"/>
<circle cx="273.5" cy="536.3" r="10" fill="none" stroke="#e02828" stroke-width="0.95"/><circle cx="273.5" cy="536.3" r="7.2" fill="none" stroke="#e02828" stroke-width="0.95"/><circle cx="273.5" cy="536.3" r="4.3" fill="none" stroke="#e02828" stroke-width="0.95"/>
<circle cx="273.5" cy="551.3" r="10" fill="none" stroke="#e02828" stroke-width="0.95"/><circle cx="273.5" cy="551.3" r="7.2" fill="none" stroke="#e02828" stroke-width="0.95"/><circle cx="273.5" cy="551.3" r="4.3" fill="none" stroke="#e02828" stroke-width="0.95"/>
<path d="M270.9 500.7H345.9V543.2H270.9Z" fill="none" stroke="#1f8c8c" stroke-width="0.85" stroke-dasharray="4 1.2 1 1.2"/>
<path d="M283 503.6H342.8V529.1H283Z" fill="none" stroke="#1f8c8c" stroke-width="0.85" stroke-dasharray="3 1.2"/>
<circle cx="302" cy="539" r="3.7" fill="#fff" stroke="#1a1ad8" stroke-width="0.9"/>
<path d="M297 535V537.5M306.5 535V537.4M305.7 537.4H312.8V534.6" stroke="#1a1ad8" stroke-width="0.8" fill="none"/>
<path d="M312.4 534.2h1.2" stroke="#111" stroke-width="1.2"/>
<path d="M320.4 539H325.5M323.5 537.6V540.4" stroke="#1a1ad8" stroke-width="1.5" fill="none"/><path d="M325.5 538.2h1.6v2.6H330" stroke="#111" stroke-width="0.8" fill="none"/>
<path d="M296 546h4M303 546h3" stroke="#aaa" stroke-width="0.5"/>
</g>
<g transform="translate(0,0)">
<circle cx="19.55" cy="122.8" r="9.4" fill="none" stroke="#111" stroke-width="0.95"/><circle cx="19.55" cy="122.8" r="6.8" fill="none" stroke="#111" stroke-width="0.95"/><circle cx="19.55" cy="122.8" r="4.2" fill="none" stroke="#111" stroke-width="0.95"/>
<circle cx="27" cy="147.2" r="9.8" fill="none" stroke="#e02828" stroke-width="0.95"/><circle cx="27" cy="147.2" r="7.2" fill="none" stroke="#e02828" stroke-width="0.95"/><circle cx="27" cy="147.2" r="4.7" fill="none" stroke="#e02828" stroke-width="0.95"/>
<path d="M19.55 122.8H82.9V156.5H19.55Z" fill="none" stroke="#e02828" stroke-width="0.95" stroke-dasharray="1 1.15"/>
<path d="M37.5 135H60.5" stroke="#9a8ae0" stroke-width="1.1"/>
<path d="M39 124.3V143.3M43.9 124.3V143.3M48.5 124.3V143.3M53.7 124.3V143.3" stroke="#222" stroke-width="0.9" fill="none"/>
<path d="M58.9 124.3V138" stroke="#22cc33" stroke-width="1.1" fill="none"/>
<path d="M39 123.6V126.2M39 139.6V144.2M38.2 135H39.8M43.9 123.6V126.2M43.9 139.6V144.2M43.1 135H44.699999999999996M48.5 123.6V126.2M48.5 139.6V144.2M47.7 135H49.3M53.7 123.6V126.2M53.7 139.6V144.2M52.900000000000006 135H54.5M58.9 123.6V126.2M58.9 139.6V144.2M58.1 135H59.699999999999996" stroke="#1a1ad8" stroke-width="1.3" fill="none"/>
<path d="M58.9 138V140" stroke="#1a1ad8" stroke-width="1.1"/>
<path d="M58.9 143.5V149.3H53.7V151.6" stroke="#111" stroke-width="1" fill="none"/>
<path d="M67.7 139.2V143.8M72.5 139.2V143.8M77.5 139.2V142" stroke="#1a1ad8" stroke-width="1.3" fill="none"/>
<path d="M77.5 141.5V153" stroke="#111" stroke-width="1" fill="none"/>
<path d="M37 151.8H80" stroke="#1a1ad8" stroke-width="1" fill="none"/>
<path d="M66.5 152.4L69 155.6M69 152.4L66.5 155.6M70.3 152.4L72.8 155.6M72.8 152.4L70.3 155.6M74 152.4L76.4 155.6M76.4 152.4L74 155.6" stroke="#1a1ad8" stroke-width="0.6" fill="none"/>
</g>
<g transform="translate(258,0)">
<circle cx="19.55" cy="122.8" r="9.4" fill="none" stroke="#111" stroke-width="0.95"/><circle cx="19.55" cy="122.8" r="6.8" fill="none" stroke="#111" stroke-width="0.95"/><circle cx="19.55" cy="122.8" r="4.2" fill="none" stroke="#111" stroke-width="0.95"/>
<circle cx="27.6" cy="146.4" r="10.2" fill="none" stroke="#e02828" stroke-width="0.95"/><circle cx="27.6" cy="146.4" r="7.6" fill="none" stroke="#e02828" stroke-width="0.95"/><circle cx="27.6" cy="146.4" r="4.9" fill="none" stroke="#e02828" stroke-width="0.95"/>
<path d="M19.55 122.8H82.9V156.5H19.55Z" fill="none" stroke="#e02828" stroke-width="0.95" stroke-dasharray="1 1.15"/>
<path d="M37.5 135H60.5" stroke="#9a8ae0" stroke-width="1.1"/>
<path d="M39 124.3V139.6M43.9 124.3V139.6M48.5 124.3V139.6M53.7 124.3V139.6" stroke="#222" stroke-width="0.9" fill="none"/>
<path d="M58.9 124.3V138" stroke="#22cc33" stroke-width="1.1" fill="none"/>
<path d="M39 123.6V126.2M39 138.2V140.6M38.2 135H39.8M43.9 123.6V126.2M43.9 138.2V140.6M43.1 135H44.699999999999996M48.5 123.6V126.2M48.5 138.2V140.6M47.7 135H49.3M53.7 123.6V126.2M53.7 138.2V140.6M52.900000000000006 135H54.5M58.9 123.6V126.2M58.9 138.2V140.6M58.1 135H59.699999999999996" stroke="#1a1ad8" stroke-width="1.3" fill="none"/>
<path d="M58.9 139.4V149.3H53.7V151.6" stroke="#111" stroke-width="1" fill="none"/>
<path d="M57.8 139.5H60.2M57.8 124.3H60.2" stroke="#111" stroke-width="1.2" fill="none"/>
<path d="M66.8 139.5H68.6M71.6 139.5H73.4M76.8 139.5H78.4" stroke="#1a1ad8" stroke-width="1.3" fill="none"/>
<path d="M77.5 139.8V153" stroke="#111" stroke-width="1" fill="none"/>
<path d="M37 151.8H80" stroke="#1a1ad8" stroke-width="1" fill="none"/>
<path d="M66.5 152.4L69 155.6M69 152.4L66.5 155.6M70.3 152.4L72.8 155.6M72.8 152.4L70.3 155.6M74 152.4L76.4 155.6M76.4 152.4L74 155.6" stroke="#1a1ad8" stroke-width="0.6" fill="none"/>
</g>
<circle cx="545.2" cy="66.9" r="9.9" fill="none" stroke="#111" stroke-width="0.95"/><circle cx="545.2" cy="66.9" r="7" fill="none" stroke="#111" stroke-width="0.95"/><circle cx="545.2" cy="66.9" r="4.3" fill="none" stroke="#111" stroke-width="0.95"/>
<path d="M545.2 66.9H592V103.2H545.2Z" fill="none" stroke="#e02828" stroke-width="0.95" stroke-dasharray="1 1.15"/>
<path d="M553.5 82.6L555 85.4V82.6M558.5 82.6L560 85.4V82.6M563.6 82.6L565 85.4V82.6" stroke="#1a1ad8" stroke-width="0.8" fill="none"/>
<path d="M554.5 101.4h1M559.5 101.4h1M564.5 101.4h1" stroke="#e02828" stroke-width="0.7"/>
<circle cx="29.4" cy="254.4" r="9.8" fill="none" stroke="#111" stroke-width="0.95"/><circle cx="29.4" cy="254.4" r="7" fill="none" stroke="#111" stroke-width="0.95"/><circle cx="29.4" cy="254.4" r="4.6" fill="none" stroke="#111" stroke-width="0.95"/>
<path d="M29.4 254.4H75.4V289.8H29.4Z" fill="none" stroke="#e02828" stroke-width="0.95" stroke-dasharray="1 1.15"/>
<path d="M39.3 280.7V256.2H72.6V285.4H48.3" stroke="#222" stroke-width="0.95" fill="none"/>
<path d="M44.3 283.8V259H67.7V283.1H44.3" stroke="#222" stroke-width="0.95" fill="none"/>
<path d="M48.5 286.9V261.3H63V280.7H39.3" stroke="#222" stroke-width="0.95" fill="none"/>
<path d="M38.4 268.8L39.3 271.4M43.4 268.8L44.3 271.4M47.6 268.8L48.5 271.4M62.1 268.8L63 271.4M66.8 268.8L67.7 271.4M71.69999999999999 268.8L72.6 271.4" stroke="#1a1ad8" stroke-width="1.1" fill="none"/>
<path d="M56 257V262.2M56 281.2V286" stroke="#e02828" stroke-width="0.8" stroke-dasharray="1 0.8"/>
<g transform="translate(0,0)">
<circle cx="287.3" cy="287.9" r="9.9" fill="none" stroke="#111" stroke-width="0.95"/><circle cx="287.3" cy="287.9" r="6.9" fill="none" stroke="#111" stroke-width="0.95"/><circle cx="287.3" cy="287.9" r="4.1" fill="none" stroke="#111" stroke-width="0.95"/>
<path d="M287.3 287.9H343V347.6H287.3Z" fill="none" stroke="#e02828" stroke-width="0.95" stroke-dasharray="1 1.15"/>
<path d="M311.6 331.5V290.5H339V341.8L336.8 344H322.5L320.7 341.8V295.6H311.6" stroke="#222" stroke-width="0.95" fill="none"/>
<path d="M295.5 321.5H340.8M295.5 338.5H340.8" stroke="#1a1ad8" stroke-width="1" fill="none"/>
<rect x="295" y="322.6" width="42" height="5.4" rx="2.4" fill="none" stroke="#1a1ad8" stroke-width="0.9" stroke-dasharray="1.4 0.9"/>
<rect x="295" y="339.6" width="42" height="5.4" rx="2.4" fill="none" stroke="#1a1ad8" stroke-width="0.9" stroke-dasharray="1.4 0.9"/>
<path d="M296.5 330.4V334.2M301.3 330.4V334.2M306.3 330.4V334.2M311.6 330.4V334.2M321.6 330.4V334.2M326.4 330.4V334.2M331.2 330.4V334.2M337.6 330.4V334.2" stroke="#1a1ad8" stroke-width="1.2" fill="none"/>
<path d="M324 323.5L327 327M327 323.5L324 327M328 323.5L331 327M331 323.5L328 327M332 323.5L335 327M324 340.5L327 344M327 340.5L324 344M328 340.5L331 344M331 340.5L328 344M332 340.5L335 344" stroke="#1a1ad8" stroke-width="0.55" fill="none"/>
</g>
<g transform="translate(258,0)">
<circle cx="287.3" cy="287.9" r="9.9" fill="none" stroke="#111" stroke-width="0.95"/><circle cx="287.3" cy="287.9" r="6.9" fill="none" stroke="#111" stroke-width="0.95"/><circle cx="287.3" cy="287.9" r="4.1" fill="none" stroke="#111" stroke-width="0.95"/>
<path d="M287.3 287.9H343V347.6H287.3Z" fill="none" stroke="#e02828" stroke-width="0.95" stroke-dasharray="1 1.15"/>
<path d="M311.6 332.5V290.5H337.6V342L336 343.6H322.3L320.7 342V295.6H311.6" stroke="#222" stroke-width="0.95" fill="none"/>
<path d="M295.5 321.5H340.8M295.5 338.5H340.8" stroke="#1a1ad8" stroke-width="1" fill="none"/>
<rect x="295" y="322.6" width="42" height="5.4" rx="2.4" fill="none" stroke="#1a1ad8" stroke-width="0.9" stroke-dasharray="1.4 0.9"/>
<rect x="295" y="339.6" width="42" height="5.4" rx="2.4" fill="none" stroke="#1a1ad8" stroke-width="0.9" stroke-dasharray="1.4 0.9"/>
<path d="M296.5 330.4V334.2M301.3 330.4V334.2M306.3 330.4V334.2M311.6 330.4V334.2M321.6 330.4V334.2M326.4 330.4V334.2M331.2 330.4V334.2M337.6 330.4V334.2" stroke="#1a1ad8" stroke-width="1.2" fill="none"/>
<path d="M324 323.5L327 327M327 323.5L324 327M328 323.5L331 327M331 323.5L328 327M332 323.5L335 327M324 340.5L327 344M327 340.5L324 344M328 340.5L331 344M331 340.5L328 344M332 340.5L335 344" stroke="#1a1ad8" stroke-width="0.55" fill="none"/>
</g>
<circle cx="17.6" cy="430.7" r="9.2" fill="none" stroke="#111" stroke-width="0.95"/><circle cx="17.6" cy="430.7" r="6.6" fill="none" stroke="#111" stroke-width="0.95"/><circle cx="17.6" cy="430.7" r="3.9" fill="none" stroke="#111" stroke-width="0.95"/>
<path d="M17.6 430.7H163.7V479.4H17.6Z" fill="none" stroke="#e02828" stroke-width="0.95" stroke-dasharray="1 1.15"/>
<rect x="32.2" y="443.3" width="125.1" height="31" fill="none" stroke="#1a1ad8" stroke-width="1"/>
<circle cx="139.9" cy="456" r="9.7" fill="none" stroke="#e02828" stroke-width="0.95"/><circle cx="139.9" cy="456" r="7.2" fill="none" stroke="#e02828" stroke-width="0.95"/><circle cx="139.9" cy="456" r="4.5" fill="none" stroke="#e02828" stroke-width="0.95"/>
<rect x="144" y="454.6" width="3" height="6.8" fill="none" stroke="#222288" stroke-width="0.9"/>
<path d="M53.7 433.8V443.3" stroke="#22cc33" stroke-width="0.8"/><path d="M52.5 433.6H55" stroke="#1a1ad8" stroke-width="1"/>
<path d="M37.9 444.9H39.699999999999996M43.1 444.9H44.9M48.0 444.9H49.8M53.1 444.9H54.9M58.0 444.9H59.8M69.89999999999999 444.9H71.7M74.39999999999999 444.9H76.2M79.3 444.9H81.10000000000001M83.8 444.9H85.60000000000001M97.8 444.9H99.60000000000001M102.69999999999999 444.9H104.5M107.69999999999999 444.9H109.5M112.39999999999999 444.9H114.2M117.19999999999999 444.9H119.0M122.1 444.9H123.9M127.0 444.9H128.8" stroke="#1a1ad8" stroke-width="1.3" fill="none"/>
<path d="M55 447.6h0.9M58.6 447.6h0.9M55.4 469.6h1M98.6 469.4h1" stroke="#111" stroke-width="0.9"/>
<path d="M37.8 471.4H39.4V473.6M43 471.4H44.6V473.6M47.9 471.4H49.5V473.6M53 471.4H54.6V473.6M66.9 471.4H68.5V473.6M71.3 471.4H72.89999999999999V473.6M86.2 471.4H87.8V473.6M91.2 471.4H92.8V473.6M95.9 471.4H97.5V473.6M110.1 471.4H111.69999999999999V473.6M115 471.4H116.6V473.6M119.8 471.4H121.39999999999999V473.6M124.6 471.4H126.19999999999999V473.6M129.5 471.4H131.1V473.6M134.4 471.4H136.0V473.6M139.2 471.4H140.79999999999998V473.6" stroke="#1a1ad8" stroke-width="0.8" fill="none"/>
<path d="M33.8 457.2L36.6 461.4M36.6 457.2L33.8 461.4M37.6 457.2L40.4 461.4M40.4 457.2L37.6 461.4M41.4 457.2L44.2 461.4M44.2 457.2L41.4 461.4" stroke="#d81010" stroke-width="1.3" fill="none"/>
<text x="3.4" y="10.1" font-size="7.9" fill="#10151c" stroke="#10151c" textLength="60" lengthAdjust="spacingAndGlyphs">Graphical preview</text>
<path d="M745.6 5.7h6.6l-3.3 3.5z" fill="#0c0c0c"/>
<rect x="758.6999999999999" y="4.6" width="2.7" height="3.2" fill="#2a2a2a"/><rect x="757.8" y="7.5" width="4.6" height="0.9" fill="#2a2a2a"/><rect x="759.75" y="8.3" width="0.7" height="2" fill="#333"/><rect x="760.0999999999999" y="5" width="0.6" height="2.5" fill="#e8eef5" opacity="0.8"/>
<rect x="768" y="3" width="8" height="8" fill="#c8434c"/><path d="M770.4 5.2l3.2 3.6M773.6 5.2l-3.2 3.6" stroke="#fff" stroke-width="1"/>
<rect x="781" y="0" width="386" height="580" fill="#f0f0f0"/>
<rect x="781" y="0" width="386" height="14.2" fill="url(#tr)"/>
<rect x="781" y="14.2" width="386" height="1" fill="#e4ecf5"/>
<rect x="781" y="15.2" width="386" height="1.8" fill="#d9d9d9"/>
<text x="784.1" y="10" font-size="7.9" fill="#10151c" stroke="#10151c" textLength="99.7" lengthAdjust="spacingAndGlyphs">Macros - ESS_Sample_Macros</text>
<path d="M1134.6 5.7h6.6l-3.3 3.5z" fill="#0c0c0c"/>
<rect x="1147.9" y="4.6" width="2.7" height="3.2" fill="#2a2a2a"/><rect x="1147" y="7.5" width="4.6" height="0.9" fill="#2a2a2a"/><rect x="1148.95" y="8.3" width="0.7" height="2" fill="#333"/><rect x="1149.3" y="5" width="0.6" height="2.5" fill="#e8eef5" opacity="0.8"/>
<rect x="1157.4" y="3" width="8" height="8" fill="#c8434c"/><path d="M1159.8000000000002 5.2l3.2 3.6M1163.0 5.2l-3.2 3.6" stroke="#fff" stroke-width="1"/>
<path d="M781.4 16V577.5" stroke="#a6a6ae" stroke-width="0.9"/>
<text x="783.5" y="27.6" font-size="7.6" fill="#111" stroke="#111" textLength="17.5" lengthAdjust="spacingAndGlyphs">Filter:</text>
<rect x="783.2" y="32.7" width="360" height="13.8" fill="#e2e2e2" stroke="#adadad" stroke-width="0.9"/>
<text x="786" y="42.6" font-size="7.7" fill="#111" stroke="#111" textLength="55" lengthAdjust="spacingAndGlyphs">- Not activated -</text>
<path d="M1135.3 38.5l2.3 2.6l2.3-2.6" stroke="#333" stroke-width="1" fill="none"/>
<rect x="1150.2" y="33.2" width="14.6" height="13.2" fill="#e2e2e2" stroke="#adadad" stroke-width="0.9"/>
<path d="M1155 42.2h1M1157 42.2h1M1159 42.2h1" stroke="#333" stroke-width="1"/>
<text x="783.5" y="59.1" font-size="7.6" fill="#111" stroke="#111" textLength="19.4" lengthAdjust="spacingAndGlyphs">Value:</text>
<rect x="783.6" y="63.9" width="380.4" height="11.4" fill="#f0f0f0" stroke="#7e7e7e" stroke-width="1.6"/>
<path d="M785 75.2H1164V65" stroke="#e8e8e8" stroke-width="0.6" fill="none"/>
<rect x="782.2" y="81.6" width="383.4" height="479.6" fill="#fff"/>
<path d="M781.8 561V81.6H1165.6" stroke="#b4b4bc" stroke-width="0.9" fill="none"/>
<path d="M783.25 560.6V82.6" stroke="#787880" stroke-width="0.9" fill="none"/>
<path d="M1165.4 81.6V561.2" stroke="#7a7a7a" stroke-width="1.1" fill="none"/>
<path d="M783.6 561.1H1166" stroke="#989898" stroke-width="1.4" fill="none"/>
<rect x="781" y="562" width="386" height="15.6" fill="#f7f7f7"/>
<rect x="781" y="577.6" width="386" height="2.4" fill="#f0f0f0"/>
<path d="M781 577.9H1167" stroke="#e4e4e4" stroke-width="0.7"/>
<rect x="783" y="562.4" width="24.4" height="14.4" fill="#f0f0f0"/><rect x="781.8" y="561.8" width="25.2" height="0.7" fill="#fcfcfc"/>
<path d="M783 577H807.4V562" stroke="#262626" stroke-width="1.05" fill="none"/>
<text x="786.6" y="572.6" font-size="8" fill="#111" stroke="#111" textLength="13.8" lengthAdjust="spacingAndGlyphs">Tree</text>
<text x="811.6" y="572.6" font-size="8" fill="#9a9aa6" stroke="#9a9aa6" textLength="10.8" lengthAdjust="spacingAndGlyphs">List</text>
<path d="M827.6 564V575" stroke="#c2c2c2" stroke-width="0.9"/>
<path d="M789.8 92.8V98.38M802.8 106.38V108.96M815.36 117.96V133.12M828.14 141.12V538.42M840.92 372.72V445.78M853.7 384.3V411.04M853.7 453.78V457.36M866.48 465.36V468.94M879.26 476.94V518.26M792.8 89.8H796.8M792.8 101.38H796.8M805.58 112.96H809.58M818.36 124.54H822.36M818.36 136.12H822.36M831.14 147.7H835.14M831.14 159.28H835.14M831.14 170.86H835.14M831.14 182.44H835.14M831.14 194.02H835.14M831.14 205.6H835.14M831.14 217.18H835.14M831.14 228.76H835.14M831.14 240.34H835.14M831.14 251.92H835.14M831.14 263.5H835.14M831.14 275.08H835.14M831.14 286.66H835.14M831.14 298.24H835.14M831.14 309.82H835.14M831.14 321.4H835.14M831.14 332.98H835.14M831.14 344.56H835.14M831.14 356.14H835.14M831.14 367.72H835.14M843.92 379.3H847.92M856.7 390.88H860.7M856.7 402.46H860.7M856.7 414.04H860.7M843.92 425.62H847.92M843.92 437.2H847.92M843.92 448.78H847.92M856.7 460.36H860.7M869.48 471.94H873.48M879.26 483.52H886.26M879.26 495.1H886.26M879.26 506.68H886.26M879.26 518.26H886.26M831.14 529.84H835.14M831.14 541.42H835.14" stroke="#a4a4a4" stroke-width="0.8" stroke-dasharray="0.8 0.8" fill="none"/>
<use href="#plus" x="790.1" y="90.75"/>
<use href="#win" x="797.5" y="85.2"/>
<text x="811.8" y="92.4" font-size="7.7" fill="#0a0a0a" stroke="#0a0a0a" textLength="66.5" lengthAdjust="spacingAndGlyphs">ESS_Sample_Project</text>
<use href="#minus" x="790.1" y="102.33"/>
<use href="#win" x="797.5" y="96.78"/>
<text x="811.8" y="103.98" font-size="7.7" fill="#0a0a0a" stroke="#0a0a0a" textLength="67.9" lengthAdjust="spacingAndGlyphs">ESS_Sample_Macros</text>
<use href="#minus" x="802.88" y="113.91"/>
<use href="#defi" x="809.98" y="108.01"/>
<text x="824.58" y="115.56" font-size="7.7" fill="#0a0a0a" stroke="#0a0a0a" textLength="28.52" lengthAdjust="spacingAndGlyphs">Defining</text>
<use href="#plus" x="815.66" y="125.49"/>
<use href="#mac" x="823.06" y="119.24"/>
<text x="837.36" y="127.14" font-size="7.7" fill="#0a0a0a" stroke="#0a0a0a" textLength="48.54" lengthAdjust="spacingAndGlyphs">Without name</text>
<use href="#minus" x="815.66" y="137.07"/>
<use href="#fold" x="823.26" y="132.42"/>
<text x="837.36" y="138.72" font-size="7.7" fill="#0a0a0a" stroke="#0a0a0a" textLength="36.04" lengthAdjust="spacingAndGlyphs">ESS_Macro</text>
<use href="#plus" x="828.44" y="148.65"/>
<use href="#fold" x="836.04" y="144"/>
<text x="850.14" y="150.3" font-size="7.7" fill="#0a0a0a" stroke="#0a0a0a" textLength="69.16" lengthAdjust="spacingAndGlyphs">000_Page_Templates</text>
<use href="#plus" x="828.44" y="160.23"/>
<use href="#fold" x="836.04" y="155.58"/>
<text x="850.14" y="161.88" font-size="7.7" fill="#0a0a0a" stroke="#0a0a0a" textLength="70.56" lengthAdjust="spacingAndGlyphs">001_Preplanning_PID</text>
<use href="#plus" x="828.44" y="171.81"/>
<use href="#fold" x="836.04" y="167.16"/>
<text x="850.14" y="173.46" font-size="7.7" fill="#0a0a0a" stroke="#0a0a0a" textLength="55.76" lengthAdjust="spacingAndGlyphs">002_Preplanning</text>
<use href="#plus" x="828.44" y="183.39"/>
<use href="#fold" x="836.04" y="178.74"/>
<text x="850.14" y="185.04" font-size="7.7" fill="#0a0a0a" stroke="#0a0a0a" textLength="79.56" lengthAdjust="spacingAndGlyphs">003_Mounting_location</text>
<use href="#plus" x="828.44" y="194.97"/>
<use href="#fold" x="836.04" y="190.32"/>
<text x="850.14" y="196.62" font-size="7.7" fill="#0a0a0a" stroke="#0a0a0a" textLength="78.16" lengthAdjust="spacingAndGlyphs">004_Additional_Macros</text>
<use href="#plus" x="828.44" y="206.55"/>
<use href="#fold" x="836.04" y="201.9"/>
<text x="850.14" y="208.2" font-size="7.7" fill="#0a0a0a" stroke="#0a0a0a" textLength="83.26" lengthAdjust="spacingAndGlyphs">005_External_Documents</text>
<use href="#plus" x="828.44" y="218.13"/>
<use href="#fold" x="836.04" y="213.48"/>
<text x="850.14" y="219.78" font-size="7.7" fill="#0a0a0a" stroke="#0a0a0a" textLength="61.86" lengthAdjust="spacingAndGlyphs">201_Power_Supply</text>
<use href="#plus" x="828.44" y="229.71"/>
<use href="#fold" x="836.04" y="225.06"/>
<text x="850.14" y="231.36" font-size="7.7" fill="#0a0a0a" stroke="#0a0a0a" textLength="77.46" lengthAdjust="spacingAndGlyphs">202_Power_Supply_24V</text>
<use href="#plus" x="828.44" y="241.29"/>
<use href="#fold" x="836.04" y="236.64"/>
<text x="850.14" y="242.94" font-size="7.7" fill="#0a0a0a" stroke="#0a0a0a" textLength="71.26" lengthAdjust="spacingAndGlyphs">203_Electrical_Engine</text>
<use href="#plus" x="828.44" y="252.87"/>
<use href="#fold" x="836.04" y="248.22"/>
<text x="850.14" y="254.52" font-size="7.7" fill="#0a0a0a" stroke="#0a0a0a" textLength="38.46" lengthAdjust="spacingAndGlyphs">204_Service</text>
<use href="#plus" x="828.44" y="264.45"/>
<use href="#fold" x="836.04" y="259.8"/>
<text x="850.14" y="266.1" font-size="7.7" fill="#0a0a0a" stroke="#0a0a0a" textLength="82.66" lengthAdjust="spacingAndGlyphs">300_Machine_Protection</text>
<use href="#plus" x="828.44" y="276.03"/>
<use href="#fold" x="836.04" y="271.38"/>
<text x="850.14" y="277.68" font-size="7.7" fill="#0a0a0a" stroke="#0a0a0a" textLength="56.76" lengthAdjust="spacingAndGlyphs">400_PLC_Control</text>
<use href="#plus" x="828.44" y="287.61"/>
<use href="#fold" x="836.04" y="282.96"/>
<text x="850.14" y="289.26" font-size="7.7" fill="#0a0a0a" stroke="#0a0a0a" textLength="97.76" lengthAdjust="spacingAndGlyphs">401_PLC_Control_IO_Module</text>
<use href="#plus" x="828.44" y="299.19"/>
<use href="#fold" x="836.04" y="294.54"/>
<text x="850.14" y="300.84" font-size="7.7" fill="#0a0a0a" stroke="#0a0a0a" textLength="86.76" lengthAdjust="spacingAndGlyphs">402_Touch_Panel_Control</text>
<use href="#plus" x="828.44" y="310.77"/>
<use href="#fold" x="836.04" y="306.12"/>
<text x="850.14" y="312.42" font-size="7.7" fill="#0a0a0a" stroke="#0a0a0a" textLength="77.46" lengthAdjust="spacingAndGlyphs">500_Pneumatic_Supply</text>
<use href="#plus" x="828.44" y="322.35"/>
<use href="#fold" x="836.04" y="317.7"/>
<text x="850.14" y="324" font-size="7.7" fill="#0a0a0a" stroke="#0a0a0a" textLength="114.66" lengthAdjust="spacingAndGlyphs">501_Pneumatic_Cylinder_Controls</text>
<use href="#plus" x="828.44" y="333.93"/>
<use href="#fold" x="836.04" y="329.28"/>
<text x="850.14" y="335.58" font-size="7.7" fill="#0a0a0a" stroke="#0a0a0a" textLength="90.86" lengthAdjust="spacingAndGlyphs">502_Valve_Cluster_Controls</text>
<use href="#plus" x="828.44" y="345.51"/>
<use href="#fold" x="836.04" y="340.86"/>
<text x="850.14" y="347.16" font-size="7.7" fill="#0a0a0a" stroke="#0a0a0a" textLength="45.36" lengthAdjust="spacingAndGlyphs">600_Hookups</text>
<use href="#plus" x="828.44" y="357.09"/>
<use href="#fold" x="836.04" y="352.44"/>
<text x="850.14" y="358.74" font-size="7.7" fill="#0a0a0a" stroke="#0a0a0a" textLength="135.36" lengthAdjust="spacingAndGlyphs">900_Example_Calculation_Power_Supply</text>
<rect x="848" y="362.22" width="315.8" height="11.1" fill="#0078d7"/>
<rect x="848.4" y="362.62" width="315" height="10.3" fill="none" stroke="#ffd9a8" stroke-width="0.5" stroke-dasharray="0.8 0.8" opacity="0.7"/>
<use href="#minus" x="828.44" y="368.67"/>
<use href="#fold" x="836.04" y="364.02"/>
<text x="850.14" y="370.32" font-size="7.7" fill="#fff" stroke="#fff" textLength="97.06" lengthAdjust="spacingAndGlyphs">901_Example_Multi_Machine</text>
<use href="#minus" x="841.22" y="380.25"/>
<use href="#fold" x="848.82" y="375.6"/>
<text x="862.92" y="381.9" font-size="7.7" fill="#0a0a0a" stroke="#0a0a0a" textLength="55.68" lengthAdjust="spacingAndGlyphs">101_01_Variant_1</text>
<use href="#plus" x="854" y="391.83"/>
<use href="#fold" x="861.6" y="387.18"/>
<text x="875.7" y="393.48" font-size="7.7" fill="#0a0a0a" stroke="#0a0a0a" textLength="41.2" lengthAdjust="spacingAndGlyphs">01_Variant_1</text>
<use href="#plus" x="854" y="403.41"/>
<use href="#fold" x="861.6" y="398.76"/>
<text x="875.7" y="405.06" font-size="7.7" fill="#0a0a0a" stroke="#0a0a0a" textLength="41.2" lengthAdjust="spacingAndGlyphs">02_Variant_2</text>
<use href="#plus" x="854" y="414.99"/>
<use href="#mac" x="861.4" y="408.74"/>
<text x="875.7" y="416.64" font-size="7.7" fill="#0a0a0a" stroke="#0a0a0a" textLength="19.8" lengthAdjust="spacingAndGlyphs">Direct</text>
<use href="#plus" x="841.22" y="426.57"/>
<use href="#fold" x="848.82" y="421.92"/>
<text x="862.92" y="428.22" font-size="7.7" fill="#0a0a0a" stroke="#0a0a0a" textLength="55.68" lengthAdjust="spacingAndGlyphs">101_02_Variant_2</text>
<use href="#plus" x="841.22" y="438.15"/>
<use href="#fold" x="848.82" y="433.5"/>
<text x="862.92" y="439.8" font-size="7.7" fill="#0a0a0a" stroke="#0a0a0a" textLength="55.68" lengthAdjust="spacingAndGlyphs">101_03_Variant_3</text>
<use href="#minus" x="841.22" y="449.73"/>
<use href="#mac" x="848.62" y="443.48"/>
<text x="862.92" y="451.38" font-size="7.7" fill="#0a0a0a" stroke="#0a0a0a" textLength="15.38" lengthAdjust="spacingAndGlyphs">Base</text>
<use href="#minus" x="854" y="461.31"/>
<use href="#multi" x="861.4" y="456.76"/>
<text x="875.7" y="462.96" font-size="7.7" fill="#0a0a0a" stroke="#0a0a0a" textLength="33.6" lengthAdjust="spacingAndGlyphs">Multi-line</text>
<use href="#minus" x="866.78" y="472.89"/>
<use href="#vari" x="874.18" y="467.14"/>
<text x="888.48" y="474.54" font-size="7.7" fill="#0a0a0a" stroke="#0a0a0a" textLength="30.12" lengthAdjust="spacingAndGlyphs">Variant A</text>
<use href="#anch" x="888.06" y="478.52"/>
<text x="901.26" y="486.12" font-size="7.7" fill="#0a0a0a" stroke="#0a0a0a" textLength="68.44" lengthAdjust="spacingAndGlyphs">Structure_Box_Actor</text>
<use href="#anch" x="888.06" y="490.1"/>
<text x="901.26" y="497.7" font-size="7.7" fill="#0a0a0a" stroke="#0a0a0a" textLength="90.44" lengthAdjust="spacingAndGlyphs">Structure_box_Cable_Actor</text>
<use href="#anch" x="888.06" y="501.68"/>
<text x="901.26" y="509.28" font-size="7.7" fill="#0a0a0a" stroke="#0a0a0a" textLength="50.44" lengthAdjust="spacingAndGlyphs">#&lt;Drive_Type&gt;</text>
<use href="#anch" x="888.06" y="513.26"/>
<text x="901.26" y="520.86" font-size="7.7" fill="#0a0a0a" stroke="#0a0a0a" textLength="59.74" lengthAdjust="spacingAndGlyphs">#&lt;Function_text&gt;</text>
<use href="#plus" x="828.44" y="530.79"/>
<use href="#fold" x="836.04" y="526.14"/>
<text x="850.14" y="532.44" font-size="7.7" fill="#0a0a0a" stroke="#0a0a0a" textLength="47.06" lengthAdjust="spacingAndGlyphs">902_PLC_Rack</text>
<use href="#plus" x="828.44" y="542.37"/>
<use href="#fold" x="836.04" y="537.72"/>
<text x="850.14" y="544.02" font-size="7.7" fill="#0a0a0a" stroke="#0a0a0a" textLength="61.56" lengthAdjust="spacingAndGlyphs">903_Fluid_cylinder</text>
</svg>
</body></html>
